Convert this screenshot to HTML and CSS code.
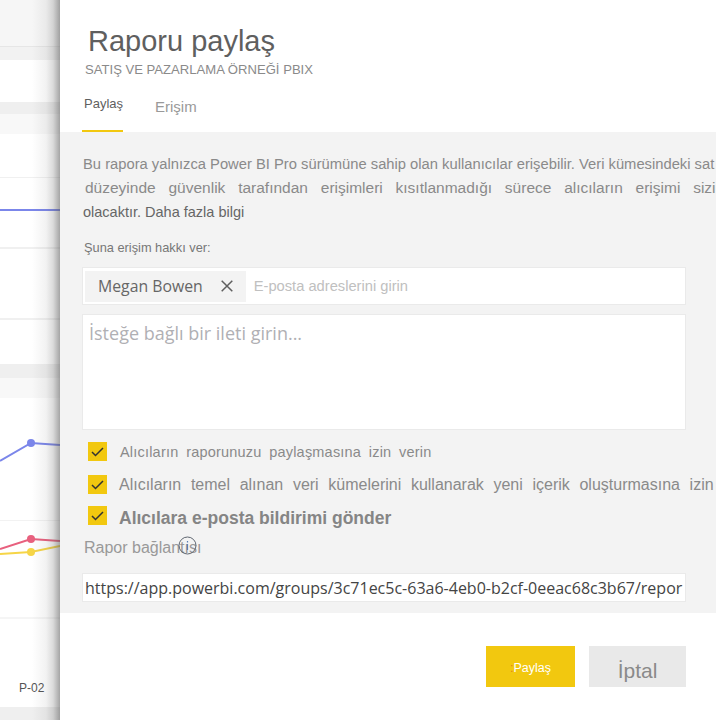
FILE: index.html
```html
<!DOCTYPE html>
<html lang="tr">
<head>
  <meta charset="UTF-8" />
  <meta name="viewport" content="width=device-width, initial-scale=1.0"/>
  <title>Raporu paylaş</title>
  <link rel="stylesheet" href="styles.css">
</head>
<body>
  <div class="backdrop">
    <div class="band band-top"></div>
    <div class="band band-a"></div>
    <div class="band band-b"></div>
    <div class="band band-c"></div>
    <div class="band band-d"></div>
    <svg class="chart" width="60" height="720" viewBox="0 0 60 720">
      <g fill="none" stroke-width="2">
        <path d="M0 210H60" stroke="#7b86ea"/>
        <path d="M0 461L31 443L60 445" stroke="#7b86ea"/>
        <path d="M0 549L31 539L60 541" stroke="#e8607e"/>
        <path d="M0 554L31 552L60 546" stroke="#f6d547"/>
      </g>
      <circle cx="31" cy="443" r="4" fill="#7b86ea"/>
      <circle cx="31" cy="539" r="4" fill="#e8607e"/>
      <circle cx="31" cy="552" r="4" fill="#f6d547"/>
    </svg>
    <span class="axis-label">P-02</span>
  </div>

  <aside class="panel">
    <header class="panel-head">
      <h1>Raporu paylaş</h1>
      <p class="subtitle">SATIŞ VE PAZARLAMA ÖRNEĞİ PBIX</p>
      <nav class="tabs">
        <a class="tab active">Paylaş</a>
        <a class="tab">Erişim</a>
      </nav>
    </header>

    <section class="panel-body">
      <p class="intro">Bu rapora yalnızca Power BI Pro sürümüne sahip olan kullanıcılar erişebilir. Veri kümesindeki sat</p>
      <p class="intro wide">düzeyinde güvenlik tarafından erişimleri kısıtlanmadığı sürece alıcıların erişimi sizi</p>
      <p class="intro dark">olacaktır. Daha fazla bilgi</p>

      <label class="grant-label">Şuna erişim hakkı ver:</label>
      <div class="people">
        <span class="chip">Megan Bowen
          <svg class="chip-x" width="12" height="12" viewBox="0 0 12 12"><path d="M.7.7l10.6 10.6M11.3.7L.7 11.3" stroke="#5f5f5f" stroke-width="1.500" fill="none"/></svg>
        </span>
        <span class="people-hint">E-posta adreslerini girin</span>
      </div>
      <div class="message">İsteğe bağlı bir ileti girin...</div>

      <div class="check-row first">
        <span class="box"><svg width="13" height="10" viewBox="0 0 13 10"><path d="M1 5l3.500 3.500L12 1" stroke="#333" stroke-width="1.500" fill="none"/></svg></span>
        <span class="check-text">Alıcıların raporunuzu paylaşmasına izin verin</span>
      </div>
      <div class="check-row second">
        <span class="box"><svg width="13" height="10" viewBox="0 0 13 10"><path d="M1 5l3.500 3.500L12 1" stroke="#333" stroke-width="1.500" fill="none"/></svg></span>
        <span class="check-text">Alıcıların temel alınan veri kümelerini kullanarak yeni içerik oluşturmasına izin</span>
      </div>
      <div class="check-row third">
        <span class="box"><svg width="13" height="10" viewBox="0 0 13 10"><path d="M1 5l3.500 3.500L12 1" stroke="#333" stroke-width="1.500" fill="none"/></svg></span>
        <span class="check-text">Alıcılara e-posta bildirimi gönder</span>
      </div>

      <div class="link-label">Rapor bağlantısı
        <svg class="info" width="19" height="19" viewBox="0 0 19 19"><circle cx="9.500" cy="9.500" r="8.500" fill="none" stroke="#5f6670" stroke-width="1"/><path d="M9.500 8v6M9.500 5v1.500" stroke="#5b7fb5" stroke-width="1.200"/></svg>
      </div>
      <div class="link-box">https://app.powerbi.com/groups/3c71ec5c-63a6-4eb0-b2cf-0eeac68c3b67/repor</div>
    </section>

    <footer class="panel-foot">
      <button class="btn primary"><i>:</i>Paylaş</button>
      <button class="btn cancel">İptal</button>
    </footer>
  </aside>
</body>
</html>
```

FILE: styles.css
```css
html, body {
  margin: 0;
  height: 720px;
  overflow: hidden;
  background: #fff;
  font-family: "Liberation Sans", Arial, sans-serif;
  color: #666;
}
body {
  display: flex;
  width: 716px;
}

/* report behind the panel */
.backdrop {
  width: 60px;
  flex: none;
  position: relative;
  background:
    linear-gradient(#f0f0f0, #f0f0f0) 0 177px / 100% 1px no-repeat,
    linear-gradient(#f0f0f0, #f0f0f0) 0 247px / 100% 2px no-repeat,
    linear-gradient(#f0f0f0, #f0f0f0) 0 318px / 100% 2px no-repeat,
    linear-gradient(#f2f2f2, #f2f2f2) 0 520px / 100% 1px no-repeat,
    linear-gradient(#f5f5f5, #f5f5f5) 0 617px / 100% 2px no-repeat,
    #fff;
}
.band {
  position: absolute;
  left: 0;
  right: 0;
}
.band-top { top: 0; height: 47px; background: linear-gradient(#f6f6f6 46px, #e6e6e6 46px); }
.band-a { top: 47px; height: 13px; background: #f2f2f2; }
.band-b { top: 102px; height: 32px; background: linear-gradient(#efefef 12px, #f8f8f8 12px); }
.band-c { top: 364px; height: 34px; background: linear-gradient(#efefef 14px, #f8f8f8 14px); }
.band-d { top: 707px; height: 13px; background: #efefef; }
.chart {
  position: absolute;
  left: 0;
  top: 0;
}
.backdrop::after {
  content: "";
  position: absolute;
  top: 0;
  bottom: 0;
  right: 0;
  width: 28px;
  background: linear-gradient(to right, rgba(90,90,90,0), rgba(90,90,90,.08) 50%, rgba(90,90,90,.22) 75%, rgba(90,90,90,.55));
}
.axis-label {
  position: absolute;
  left: 19px;
  top: 681px;
  font-size: 12px;
  color: #555;
}

/* share panel */
.panel {
  flex: 1;
  min-width: 0;
  display: flex;
  flex-direction: column;
}
.panel-head {
  height: 132px;
  flex: none;
  padding-left: 24px;
  overflow: hidden;
}
.panel-head h1 {
  margin: 24px 0 0 4px;
  font-size: 29px;
  line-height: 34px;
  font-weight: 400;
  color: #5f5f5f;
}
.subtitle {
  margin: 4px 0 0 0;
  padding-left: 1px;
  font-size: 13.100px;
  line-height: 16px;
  color: #8a8a8a;
}
.tabs {
  display: flex;
  gap: 32px;
  margin-top: 16px;
}
.tab {
  font-size: 15px;
  line-height: 20px;
  padding-top: 3px;
  color: #999;
}
.tab.active {
  font-size: 13px;
  color: #5f5f5f;
  margin-left: -2px;
  padding: 0 0 16px 2px;
  border-bottom: 2px solid #f2c80f;
}
.panel-body {
  height: 481px;
  flex: none;
  background: #f3f3f3;
  padding: 20px 0 0 22px;
  box-sizing: border-box;
  overflow: hidden;
}
.intro {
  margin: 0 0 0 1px;
  font-size: 14.750px;
  line-height: 24px;
  white-space: nowrap;
  color: #8a8a8a;
}
.intro.wide {
  margin-left: 3px;
  font-size: 15.500px;
  word-spacing: 8.500px;
}
.intro.dark {
  font-size: 14.500px;
  color: #666;
}
.grant-label {
  display: block;
  margin: 16px 0 0 2px;
  font-size: 12.800px;
  line-height: 16px;
  color: #777;
}
.people {
  display: flex;
  align-items: center;
  width: 604px;
  height: 38px;
  margin-top: 11px;
  padding-left: 2px;
  box-sizing: border-box;
  background: #fff;
  border: 1px solid #eaeaea;
}
.chip {
  display: flex;
  align-items: center;
  gap: 18px;
  height: 31px;
  padding: 0 13px;
  background: #f3f3f3;
  font-family: "Open Sans", sans-serif;
  font-size: 15.800px;
  color: #666;
}
.people-hint {
  margin-left: 8px;
  font-size: 14.700px;
  color: #c0c0c0;
}
.message {
  width: 604px;
  height: 116px;
  margin-top: 9px;
  padding: 6px 6px;
  box-sizing: border-box;
  background: #fff;
  border: 1px solid #eaeaea;
  font-family: "Open Sans", sans-serif;
  font-size: 18px;
  color: #b0b0b4;
}
.check-row {
  display: flex;
  align-items: flex-start;
  gap: 12px;
  padding-left: 6px;
  white-space: nowrap;
}
.check-row.first { margin-top: 12px; gap: 13px; }
.check-row.second { margin-top: 13px; }
.check-row.third { margin-top: 11px; }
.box {
  width: 19px;
  height: 19px;
  flex: none;
  display: flex;
  align-items: center;
  justify-content: center;
  background: #f2c80f;
}
.check-text {
  line-height: 20px;
  color: #8a8a8a;
}
.first .check-text {
  font-size: 14.500px;
  word-spacing: 3.500px;
  letter-spacing: .2px;
}
.second .check-text {
  font-size: 16px;
  word-spacing: 5.200px;
}
.third .check-text {
  padding-top: 2px;
  font-size: 17.500px;
  font-weight: 700;
  color: #858585;
}
.link-label {
  position: relative;
  margin: 10px 0 0 2px;
  font-size: 16px;
  line-height: 20px;
  color: #999;
}
.info {
  position: absolute;
  left: 94px;
  top: -2px;
}
.link-box {
  width: 604px;
  height: 29px;
  margin-top: 15px;
  padding: 1px 0 0 2px;
  box-sizing: border-box;
  background: #fff;
  border: 1px solid #eaeaea;
  font-family: "Open Sans", sans-serif;
  font-size: 16px;
  line-height: 26px;
  color: #444;
  white-space: nowrap;
}
.panel-foot {
  flex: 1;
  display: flex;
  align-items: flex-start;
  justify-content: flex-end;
  gap: 14px;
  padding: 33px 30px 0 0;
}
.btn {
  height: 41px;
  border: 0;
  margin: 0;
  padding: 0;
  font-family: inherit;
}
.btn.primary {
  width: 89px;
  padding-top: 3px;
  background: #f2c80f;
  color: #fff;
  font-size: 12.500px;
}
.btn.primary i {
  font-style: normal;
  color: #e8801a;
}
.btn.cancel {
  width: 97px;
  padding-top: 9px;
  background: #e9e9e9;
  color: #8a8a8a;
  font-size: 21px;
}
```
